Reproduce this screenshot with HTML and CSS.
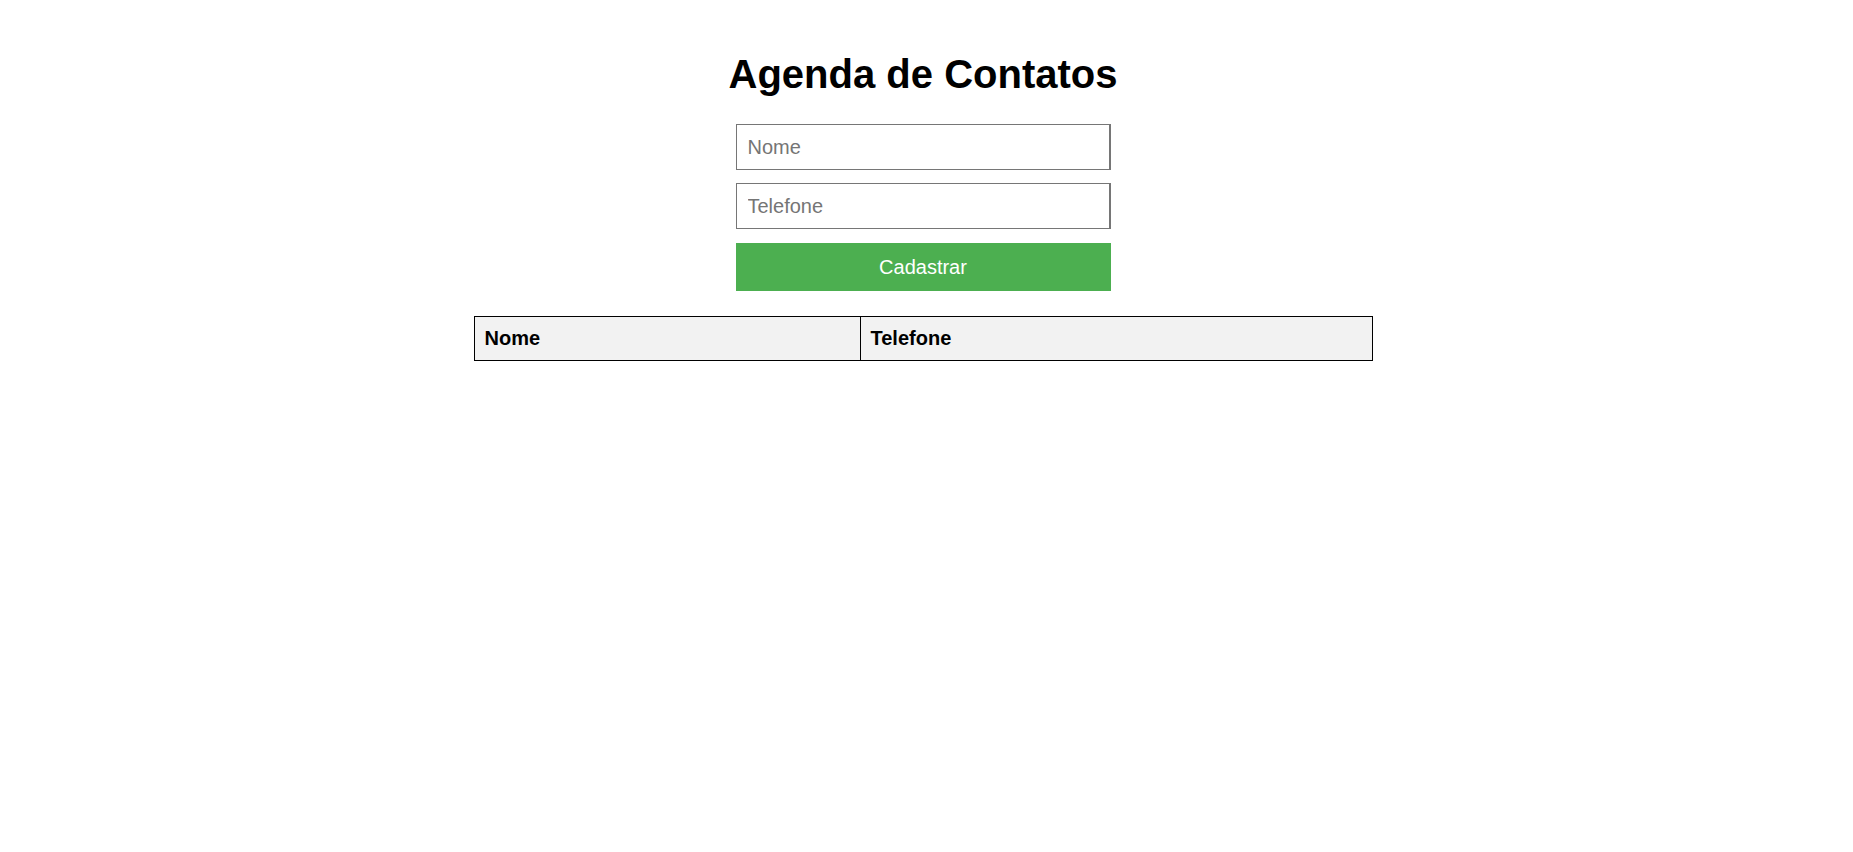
FILE: index.html
```
<!DOCTYPE html>
<html lang="pt-BR">
<head>
<meta charset="utf-8">
<title>Agenda de Contatos</title>
<link rel="stylesheet" href="styles.css">
</head>
<body>
  <main class="page">
    <h1 class="title">Agenda de Contatos</h1>
    <form class="form">
      <input class="field" type="text" placeholder="Nome">
      <input class="field" type="text" placeholder="Telefone">
      <button class="submit" type="button">Cadastrar</button>
    </form>
    <table class="contacts">
      <colgroup>
        <col class="col-name">
        <col class="col-phone">
      </colgroup>
      <thead>
        <tr>
          <th>Nome</th>
          <th>Telefone</th>
        </tr>
      </thead>
      <tbody></tbody>
    </table>
  </main>
</body>
</html>
```

FILE: styles.css
```
html, body {
  margin: 0;
  padding: 0;
  background: #ffffff;
}

body {
  font-family: "Liberation Sans", Arial, sans-serif;
  color: #000;
}

.page {
  padding: 25px 7px 25px 0;
}

.title {
  font-size: 40px;
  font-weight: bold;
  line-height: 46px;
  text-align: center;
  margin: 26px 0 27px;
}

.form {
  width: 375px;
  margin: 0 auto;
  display: flex;
  flex-direction: column;
}

.field {
  box-sizing: border-box;
  width: 100%;
  height: 46px;
  margin: 0 0 13px;
  padding: 0 11px;
  border-style: solid;
  border-color: #767676;
  border-width: 1px 2px 1px 1px;
  border-radius: 0;
  font-family: "Liberation Sans", Arial, sans-serif;
  font-size: 20px;
  color: #000;
  background: #fff;
  outline: none;
}

.field::placeholder {
  color: #757575;
}

.submit {
  box-sizing: border-box;
  width: 100%;
  height: 48px;
  margin: 1px 0 0;
  padding: 0;
  border: none;
  background: #4caf50;
  color: #ffffff;
  font-family: "Liberation Sans", Arial, sans-serif;
  font-size: 20px;
  cursor: pointer;
}

.contacts {
  width: 898px;
  margin: 25px auto 0;
  border-collapse: collapse;
  table-layout: fixed;
}

.col-name {
  width: 386px;
}

.col-phone {
  width: 512px;
}

.contacts th {
  background: #f2f2f2;
  border: 1px solid #000;
  padding: 10px 10px;
  text-align: left;
  font-size: 20px;
  font-weight: bold;
  line-height: 23px;
}
```
